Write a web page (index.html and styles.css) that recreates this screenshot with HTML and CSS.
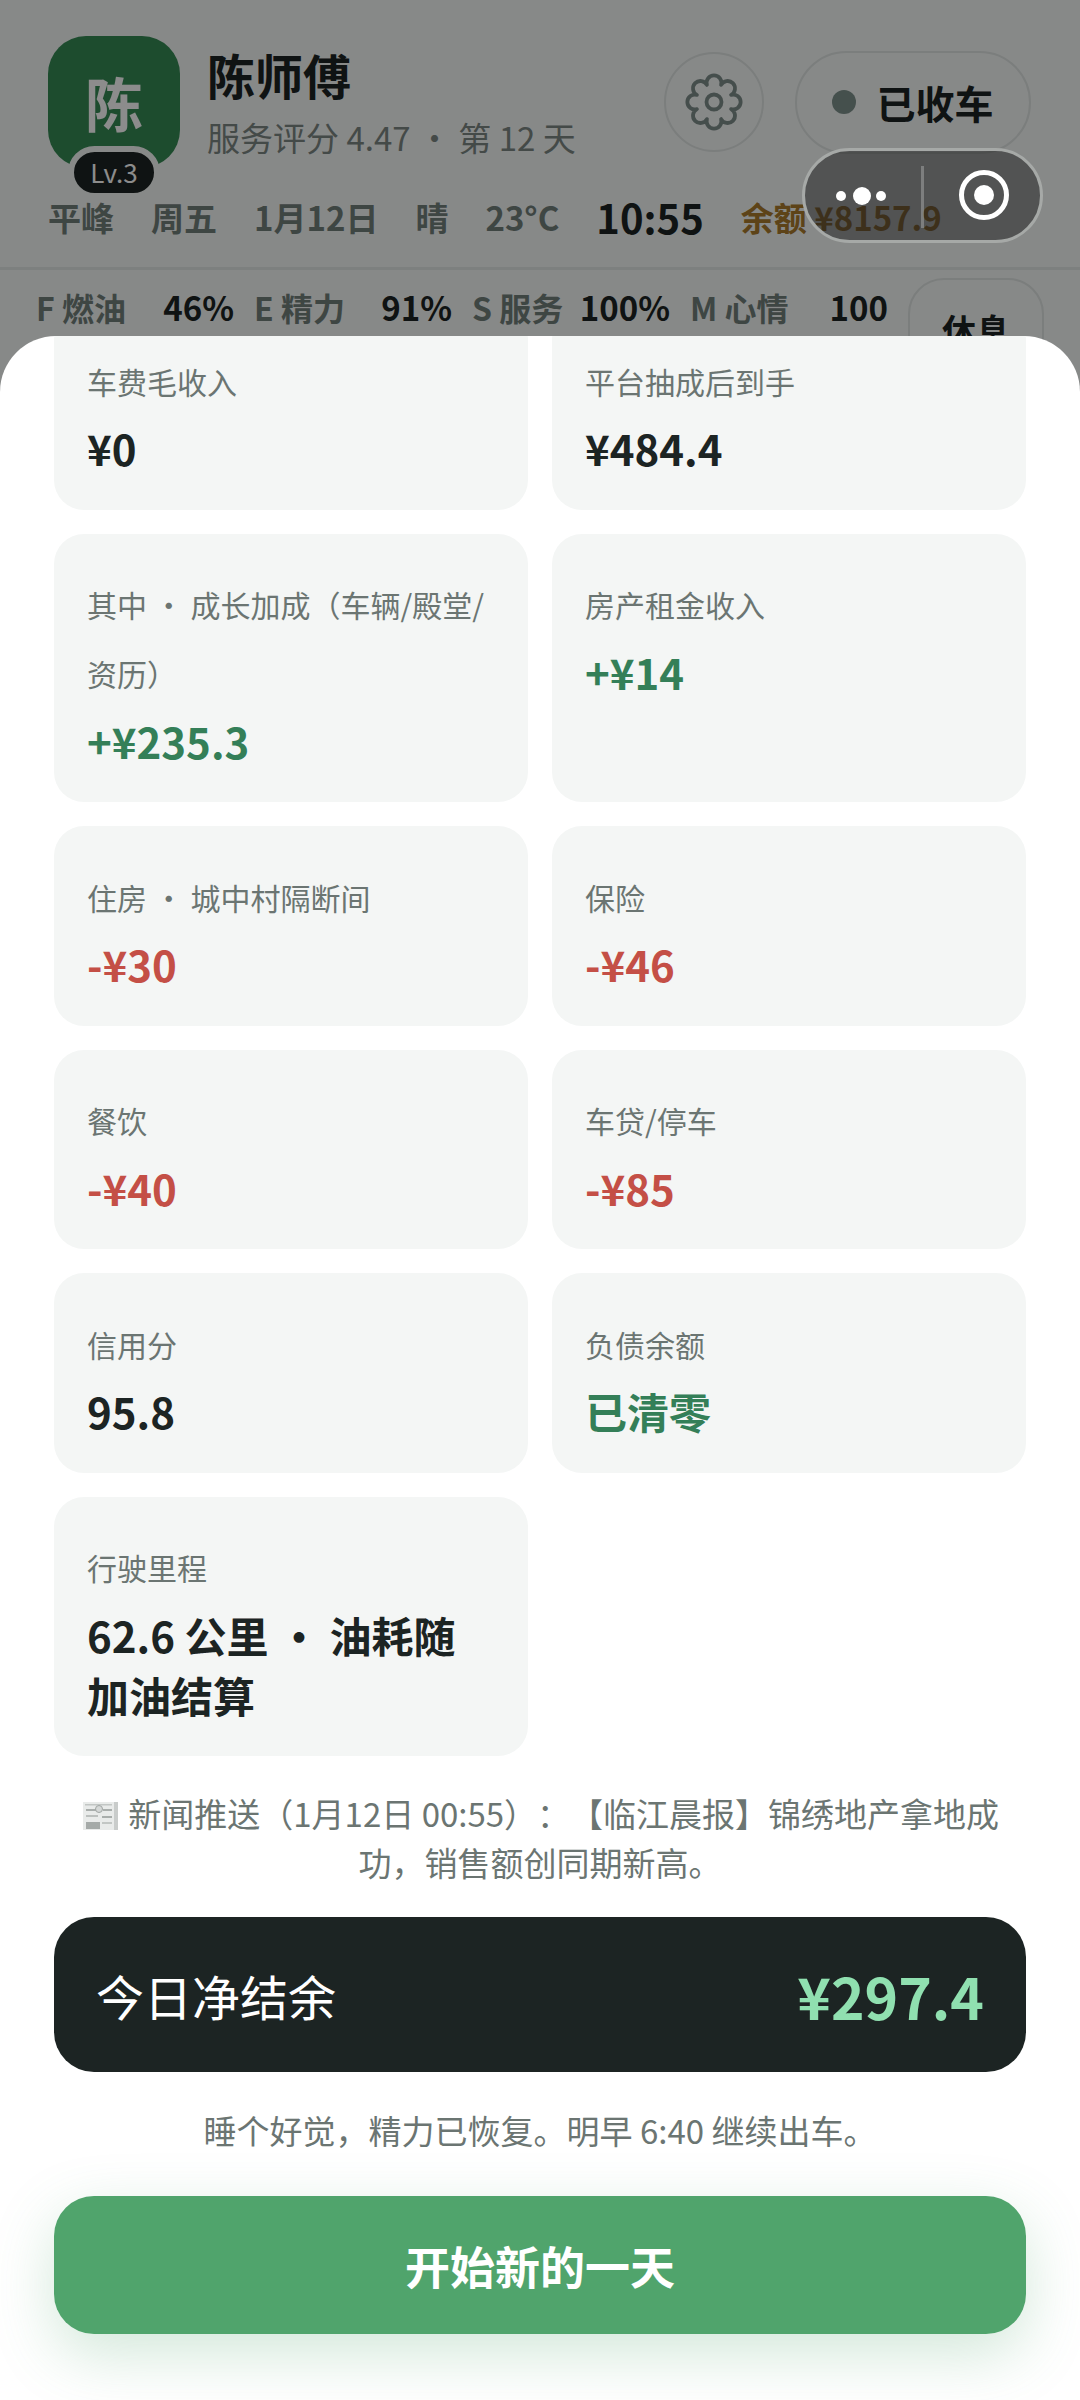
FILE: index.html
```html
<!DOCTYPE html>
<html lang="zh-CN">
<head>
<meta charset="utf-8">
<title>今日结算</title>
<link rel="stylesheet" href="styles.css">
</head>
<body>
<div class="page">
  <header class="top">
    <div class="head-row">
      <div class="avatar"><span class="avatar-char">陈</span><span class="level">Lv.3</span></div>
      <div class="who">
        <div class="name">陈师傅</div>
        <div class="sub">服务评分 4.47 · 第 12 天</div>
      </div>
      <button class="gear" aria-label="设置">
        <svg viewBox="-30 -30 60 60" class="gear-icon"><path d="M-7.08 -17.09A7.4 7.4 0 1 1 7.08 -17.09A7.4 7.4 0 1 1 17.09 -7.08A7.4 7.4 0 1 1 17.09 7.08A7.4 7.4 0 1 1 7.08 17.09A7.4 7.4 0 1 1 -7.08 17.09A7.4 7.4 0 1 1 -17.09 7.08A7.4 7.4 0 1 1 -17.09 -7.08A7.4 7.4 0 1 1 -7.08 -17.09Z"/><circle r="7.5"/></svg>
      </button>
      <div class="state"><span class="state-dot"></span>已收车</div>
    </div>
    <div class="status-row">
      <span>平峰</span><span>周五</span><span>1月12日</span><span>晴</span><span>23°C</span>
      <span class="clock">10:55</span><span class="balance">余额 ¥8157.9</span>
    </div>
  </header>
  <section class="stats">
    <div class="stat"><span>F 燃油</span><b>46%</b></div>
    <div class="stat"><span>E 精力</span><b>91%</b></div>
    <div class="stat"><span>S 服务</span><b>100%</b></div>
    <div class="stat"><span>M 心情</span><b>100</b></div>
    <button class="rest">休息</button>
  </section>
</div>

<div class="scrim"></div>

<div class="capsule">
  <svg class="capsule-dots" viewBox="0 0 60 20"><circle cx="9" cy="10" r="5"/><circle cx="30" cy="10" r="9"/><circle cx="49" cy="10" r="5"/></svg>
  <span class="capsule-line"></span>
  <svg class="capsule-rec" viewBox="0 0 52 52"><circle class="ring" cx="26" cy="26" r="22.5"/><circle cx="26" cy="26" r="10"/></svg>
</div>

<section class="sheet">
  <div class="cards">
    <div class="card"><div class="label">车费毛收入</div><div class="value">¥0</div></div>
    <div class="card"><div class="label">平台抽成后到手</div><div class="value">¥484.4</div></div>
    <div class="card"><div class="label">其中 · 成长加成（车辆/殿堂/资历）</div><div class="value up">+¥235.3</div></div>
    <div class="card"><div class="label">房产租金收入</div><div class="value up">+¥14</div></div>
    <div class="card"><div class="label">住房 · 城中村隔断间</div><div class="value down">-¥30</div></div>
    <div class="card"><div class="label">保险</div><div class="value down">-¥46</div></div>
    <div class="card"><div class="label">餐饮</div><div class="value down">-¥40</div></div>
    <div class="card"><div class="label">车贷/停车</div><div class="value down">-¥85</div></div>
    <div class="card"><div class="label">信用分</div><div class="value">95.8</div></div>
    <div class="card"><div class="label">负债余额</div><div class="value up">已清零</div></div>
    <div class="card"><div class="label">行驶里程</div><div class="value">62.6 公里 · 油耗随加油结算</div></div>
  </div>
  <p class="news"><svg class="news-icon" viewBox="0 0 40 32"><rect x="2" y="2" width="35" height="28" fill="#e9ebea"/><rect x="33" y="2" width="4" height="28" fill="#c9cccb"/><rect x="4" y="4" width="27" height="1.5" fill="#c2c6c4"/><rect x="5" y="9" width="10" height="2" fill="#a9aeac"/><circle cx="18" cy="9" r="3.5" fill="#d5d8d7" stroke="#a0a5a3"/><rect x="22" y="9" width="9" height="2" fill="#a9aeac"/><rect x="5" y="15" width="12" height="2" fill="#bcc0be"/><rect x="21" y="16" width="10" height="2" fill="#a9aeac"/><rect x="5" y="22" width="14" height="7" fill="#a5aaa8"/><rect x="21" y="22" width="10" height="2" fill="#c2c6c4"/></svg> 新闻推送（1月12日 00:55）：【临江晨报】锦绣地产拿地成功，销售额创同期新高。</p>
  <div class="net"><span class="net-label">今日净结余</span><span class="net-value">¥297.4</span></div>
  <p class="note">睡个好觉，精力已恢复。明早 6:40 继续出车。</p>
  <button class="start">开始新的一天</button>
</section>
</body>
</html>
```
FILE: styles.css
```css
* { box-sizing: border-box; }
html, body { margin: 0; height: 2400px; overflow: hidden; }
body { position: relative; background: #f6f9f8; font-family: "Noto Sans CJK SC", "Noto Sans", sans-serif; color: #1c2423; text-spacing-trim: space-all; }
button { font-family: inherit; margin: 0; }

.top { padding: 36px 49px 0 48px; }
.head-row { display: flex; align-items: center; }
.avatar { position: relative; width: 132px; height: 132px; border-radius: 38px; background: #368a55; display: flex; align-items: center; justify-content: center; flex: none; }
.avatar-char { color: #fff; font-size: 58px; font-weight: 700; line-height: 1; }
.level { position: absolute; left: 20px; bottom: -31px; width: 92px; height: 53px; border: 6px solid #f6f9f8; border-radius: 27px; background: #1c2423; color: #fff; font-size: 26px; line-height: 40px; text-align: center; }
.who { margin-left: 27px; flex: 1; margin-top: -2px; }
.name { font-size: 48px; font-weight: 700; line-height: 64px; }
.sub { font-size: 33px; line-height: 46px; color: #7c8783; margin-top: 8px; }
.gear { width: 100px; height: 100px; border-radius: 50%; border: 2px solid #e0e5e3; background: transparent; padding: 0; display: flex; align-items: center; justify-content: center; }
.gear-icon { width: 60px; height: 60px; fill: none; stroke: #7f8e8b; stroke-width: 3.8; stroke-linejoin: round; }
.state { margin-left: 31px; width: 236px; height: 103px; border: 2px solid #e0e5e3; border-radius: 52px; display: flex; align-items: center; justify-content: center; gap: 20px; font-size: 39px; font-weight: 700; }
.state-dot { width: 24px; height: 24px; border-radius: 50%; background: #7e928d; }
.status-row { display: flex; align-items: center; gap: 37px; margin-top: 23px; height: 52px; font-size: 33px; font-weight: 700; color: #72807b; white-space: nowrap; }
.clock { font-size: 40px; font-weight: 700; color: #1c2423; }
.balance { color: #a97b2c; }

.stats { margin-top: 24px; border-top: 3px solid #e4e9e7; padding: 8px 36px 0 36px; display: flex; align-items: flex-start; gap: 20px; }
.stat { flex: 1; height: 58px; display: flex; justify-content: space-between; align-items: center; font-size: 32px; font-weight: 700; color: #72807b; white-space: nowrap; }
.stat b { color: #1c2423; font-size: 33px; font-weight: 700; }
.rest { flex: none; width: 136px; height: 102px; border: 2px solid #e0e5e3; border-radius: 36px; background: transparent; color: #1c2423; font-size: 34px; font-weight: 700; padding: 0; }

.scrim { position: absolute; inset: 0; background: rgba(0, 0, 0, .45); }

.capsule { position: absolute; left: 802px; top: 148px; width: 241px; height: 95px; border: 3px solid #a6a9a7; border-radius: 48px; background: rgba(30, 30, 30, .5); display: flex; align-items: center; }
.capsule-dots { position: absolute; left: 27px; top: 35px; width: 60px; height: 20px; fill: #fff; }
.capsule-line { position: absolute; left: 116px; top: 15px; width: 3px; height: 62px; background: rgba(255, 255, 255, .25); }
.capsule-rec { position: absolute; left: 153px; top: 18px; width: 52px; height: 52px; fill: #fff; }
.capsule-rec .ring { fill: none; stroke: #fff; stroke-width: 5; }

.sheet { position: absolute; left: 0; right: 0; top: 336px; bottom: 0; background: #fff; border-radius: 56px 56px 0 0; padding: 0 54px; overflow: hidden; }
.cards { margin-top: -26px; display: grid; grid-template-columns: 1fr 1fr; gap: 24px; }
.card { background: #f4f6f5; border-radius: 30px; padding: 39.5px 33px 31.5px; }
.label { font-size: 30px; line-height: 69px; color: #6b7572; margin-top: -3px; }
.value { font-size: 42px; font-weight: 700; line-height: 60px; color: #1c2423; margin-top: 2.5px; }
.up { color: #347f58; }
.down { color: #c44f46; }

.news { margin: 33px 0 0; font-size: 33px; line-height: 49px; color: #6b7572; text-align: center; }
.news-icon { display: inline-block; width: 40px; height: 32px; vertical-align: -5px; }
.net { margin-top: 30px; height: 155px; border-radius: 40px; background: #1c2423; padding: 0 42px; display: flex; align-items: center; justify-content: space-between; }
.net-label { font-size: 48px; color: #fff; }
.net-value { font-size: 57px; font-weight: 700; color: #90e0b0; }
.note { margin: 34px 0 0; font-size: 33px; line-height: 49px; color: #6b7572; text-align: center; }
.start { display: block; width: 100%; margin-top: 41px; height: 138px; border: 0; border-radius: 40px; background: #50a46c; color: #fff; font-size: 45px; font-weight: 700; box-shadow: 0 20px 60px rgba(80, 164, 108, .25); }
```
